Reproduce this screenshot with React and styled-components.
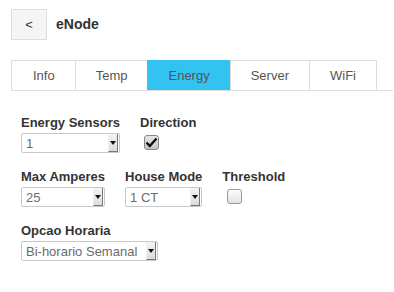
import styled, { createGlobalStyle } from 'styled-components';

const GlobalStyle = createGlobalStyle`
  body {
    margin: 0;
    background: #fff;
    font-family: "Liberation Sans", Arial, sans-serif;
    color: #333;
  }
`;

const Page = styled.div`
  padding: 9px 1px 0 11px;
`;

const Header = styled.div`
  display: flex;
  align-items: center;
  gap: 9px;
  height: 31px;
`;

const BackButton = styled.button`
  width: 36px;
  height: 31px;
  border: 1px solid #ddd;
  background: #f5f5f5;
  color: #333;
  font-family: inherit;
  font-size: 13px;
  padding: 0;
  cursor: pointer;
`;

const Title = styled.h1`
  margin: 0 0 1px;
  font-size: 14px;
  font-weight: bold;
  color: #333;
`;

const TabBar = styled.div`
  display: flex;
  margin-top: 20px;
  border-bottom: 1px solid #ddd;
`;

const Tab = styled.div`
  height: 29px;
  line-height: 29px;
  padding: 0 20px;
  font-size: 13px;
  color: #555;
  border-top: 1px solid ${({ $active }) => ($active ? '#33c3f0' : '#ddd')};
  border-left: 1px solid ${({ $active }) => ($active ? '#33c3f0' : '#ddd')};
  background: ${({ $active }) => ($active ? '#33c3f0' : '#fff')};
  &:first-child {
    padding-left: 21px;
  }
  &:last-child {
    border-right: 1px solid #ddd;
  }
`;

const Content = styled.div`
  padding: 24px 10px 0;
  display: flex;
  flex-direction: column;
  gap: 16px;
`;

const Row = styled.div`
  display: flex;
  gap: 20px;
`;

const Field = styled.div`
  display: inline-flex;
  flex-direction: column;
  gap: 2px;
`;

const Label = styled.label`
  font-size: 13px;
  line-height: 16px;
  font-weight: bold;
  color: #333;
  white-space: nowrap;
`;

const SelectBox = styled.div`
  display: flex;
  align-items: stretch;
  height: 20px;
  box-sizing: border-box;
  border: 1px solid #c8c8c8;
  border-radius: 2px;
  background: #fff;
`;

const NativeSelect = styled.select`
  appearance: none;
  flex: 1;
  min-width: 0;
  border: none;
  outline: none;
  background: transparent;
  font-family: inherit;
  font-size: 13px;
  color: #6b6b6b;
  padding: 0 8px 0 4px;
  margin: 0;
`;

const Arrow = styled.span`
  width: 8px;
  margin: 0 1px 0 0;
  display: flex;
  align-items: center;
  justify-content: center;
  background: linear-gradient(#f4f4f4, #dcdcdc);
  border-right: 1px solid #777;
  border-bottom: 1px solid #777;
  border-left: 1px solid #eee;
  &::after {
    content: '';
    border-left: 3px solid transparent;
    border-right: 3px solid transparent;
    border-top: 4px solid #111;
  }
`;

const Check = styled.span`
  width: 15px;
  height: 15px;
  box-sizing: border-box;
  margin: 2px 0 0 ${({ $offset }) => $offset}px;
  border: 1px solid ${({ $checked }) => ($checked ? '#888' : '#999')};
  border-radius: 3px;
  background: ${({ $checked }) =>
    $checked ? 'linear-gradient(#e6e6e6, #c4c4c4)' : 'linear-gradient(#fdfdfd, #e2e2e2)'};
  display: flex;
  align-items: center;
  justify-content: center;
`;

const Select = ({ value }) => (
  <SelectBox>
    <NativeSelect defaultValue={value}>
      <option>{value}</option>
    </NativeSelect>
    <Arrow />
  </SelectBox>
);

const Checkbox = ({ checked, offset }) => (
  <Check $checked={checked} $offset={offset}>
    {checked && (
      <svg width="13" height="11" viewBox="0 0 13 11">
        <path d="M1.5 5.5 L4.8 9 L11.5 1.5" fill="none" stroke="#111" strokeWidth="2.4" />
      </svg>
    )}
  </Check>
);

const tabs = ['Info', 'Temp', 'Energy', 'Server', 'WiFi'];

export default function App() {
  return (
    <Page>
      <GlobalStyle />
      <Header>
        <BackButton>&lt;</BackButton>
        <Title>eNode</Title>
      </Header>
      <TabBar>
        {tabs.map((t) => (
          <Tab key={t} $active={t === 'Energy'}>
            {t}
          </Tab>
        ))}
      </TabBar>
      <Content>
        <Row>
          <Field>
            <Label>Energy Sensors</Label>
            <Select value="1" />
          </Field>
          <Field>
            <Label>Direction</Label>
            <Checkbox checked offset={4} />
          </Field>
        </Row>
        <Row>
          <Field>
            <Label>Max Amperes</Label>
            <Select value="25" />
          </Field>
          <Field>
            <Label>House Mode</Label>
            <Select value="1 CT" />
          </Field>
          <Field>
            <Label>Threshold</Label>
            <Checkbox offset={5} />
          </Field>
        </Row>
        <Row>
          <Field>
            <Label>Opcao Horaria</Label>
            <Select value="Bi-horario Semanal" />
          </Field>
        </Row>
      </Content>
    </Page>
  );
}
